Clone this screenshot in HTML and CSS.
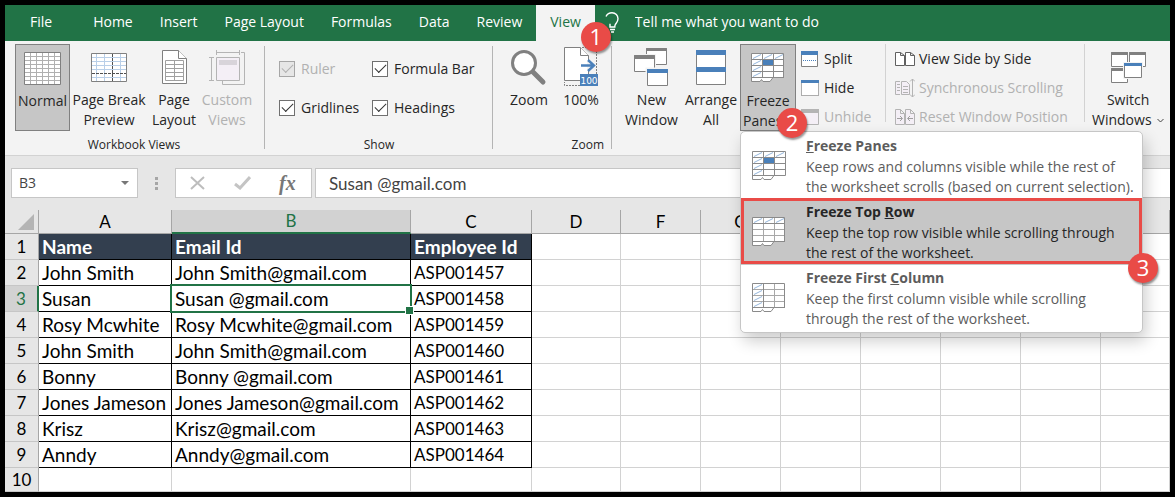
FILE: index.html
```html
<!DOCTYPE html>
<html lang="en">
<head>
<meta charset="utf-8">
<title>Worksheet</title>
<link rel="stylesheet" href="styles.css">
</head>
<body>
<div class="app">
  <nav class="tabs">
    <button class="tab tab-file">File</button>
    <button class="tab">Home</button>
    <button class="tab">Insert</button>
    <button class="tab">Page Layout</button>
    <button class="tab">Formulas</button>
    <button class="tab">Data</button>
    <button class="tab">Review</button>
    <button class="tab tab-active">View<span class="badge badge-view">1</span></button>
    <label class="tell">
      <svg width="14" height="21" viewBox="0 0 14 21" fill="none" stroke="#fff" stroke-width="1.4"><path d="M1 4.5C2.500 1.500 4.500.8 7 .8c3.600 0 6 2.700 6 6 0 2.700-1.500 4-2.600 5.600-.5.8-.6 1.600-.6 2.600H5v-3.200"/><path d="M5 17.500h5M6 20h3"/></svg>
      <input type="text" aria-label="Tell me" placeholder="Tell me what you want to do">
    </label>
  </nav>

  <div class="ribbon">
    <section class="group group-views">
      <div class="tools">
        <button class="big big-on">
          <svg width="37" height="33" viewBox="0 0 37 33" fill="#fff" stroke="#808080"><path d="M.5.5h36v32H.5z"/><path stroke="#b0b0b0" d="M6.500 1v31M12.500 1v31M18.500 1v31M24.500 1v31M30.500 1v31M1 4.500h35M1 8.500h35M1 12.500h35M1 16.500h35M1 20.500h35M1 24.500h35M1 28.500h35"/></svg>
          <span>Normal</span>
        </button>
        <button class="big big-break">
          <svg width="36" height="29" viewBox="0 0 36 29" fill="#fff" stroke="#808080"><path d="M.5.5h35v28H.5z"/><path stroke="#b9cfe8" d="M5.500 1v27M13.500 1v27M29.500 1v27M1 4.500h34M1 8.500h34M1 12.500h34M1 16.500h34M1 24.500h34"/><path stroke="#505050" stroke-dasharray="3 1" d="M21.500 1v27M1 20.500h34"/></svg>
          <span>Page Break<br>Preview</span>
        </button>
        <button class="big big-page">
          <svg width="25" height="34" viewBox="0 0 25 34" fill="#fff" stroke="#808080"><path d="M.5.5h16l8 8v25H.5z"/><path d="M16.500.5v8h8"/><path stroke="#a0a0a0" d="M3.500 10.500h18v20h-18zM12.500 10.500v20M3.500 14.500h18M3.500 18.500h18M3.500 22.500h18M3.500 26.500h18"/></svg>
          <span>Page<br>Layout</span>
        </button>
        <button class="big big-custom" disabled>
          <svg width="36" height="35" viewBox="0 0 36 35" fill="none" stroke="#b4b4b4"><path d="M7.500 2.500h23M7.500 0v5M30.500 0v5M2.500 7.500v23M0 7.500h5M0 30.500h5M32 2.500h3.500v32h-22V31"/><path fill="#f4eff6" d="M7.500 7.500h23v23h-23z"/><path fill="#d8d4da" stroke="none" d="M10 10h18v5H10z"/></svg>
          <span>Custom<br>Views</span>
        </button>
      </div>
      <h2>Workbook Views</h2>
    </section>

    <section class="group group-show">
      <div class="tools checks">
        <label class="off"><input type="checkbox" checked disabled>Ruler</label>
        <label><input type="checkbox" checked>Formula Bar</label>
        <label><input type="checkbox" checked>Gridlines</label>
        <label><input type="checkbox" checked>Headings</label>
      </div>
      <h2>Show</h2>
    </section>

    <section class="group group-zoom">
      <div class="tools">
        <button class="big big-zoom">
          <svg width="36" height="35" viewBox="0 0 36 35" fill="#fff" stroke="#808080"><path stroke-width="5" stroke-linecap="round" d="M22 22l10 10"/><circle cx="13" cy="13" r="11.500" stroke-width="3"/></svg>
          <span>Zoom</span>
        </button>
        <button class="big big-hundred">
          <svg width="34" height="40" viewBox="0 0 34 40" fill="#fff" stroke="#808080"><path fill="none" stroke-dasharray="2 1" d="M18 .5h14.500v38H.5V35"/><path d="M.5.5h16l8 8v25H.5z"/><path d="M16.500.5v8h8"/><path stroke="none" fill="#f3f3f3" d="M23 14h3v10h-3z"/><path fill="none" stroke="#4a80ba" stroke-width="2.400" d="M17 18.500h13M24 13l6 5.500-6 5.500"/><path fill="#4a80ba" stroke="none" d="M16 27h18v12H16z"/><text class="icon-text" x="25" y="37" text-anchor="middle">100</text></svg>
          <span>100%</span>
        </button>
      </div>
      <h2>Zoom</h2>
    </section>

    <section class="group group-window">
      <div class="tools">
        <button class="big big-new">
          <svg width="35" height="39" viewBox="0 0 35 39" fill="#fff" stroke="#808080"><path d="M12.500.5h20v16h-20z"/><path fill="#808080" d="M12.500.5h20v2h-20z"/><path stroke="#f3f3f3" d="M-.5 6.500h22v18h-22z"/><path d="M.5 7.500h20v16H.5z"/><path fill="#808080" d="M.5 7.500h20v3H.5z"/><path stroke="#f3f3f3" stroke-width="2" d="M12.500 20.500h22v18h-22z"/><path d="M13.500 21.500h20v16h-20z"/><path fill="#4a80ba" stroke="none" d="M13 21h21v4H13z"/></svg>
          <span>New<br>Window</span>
        </button>
        <button class="big big-arrange">
          <svg width="30" height="35" viewBox="0 0 30 35" fill="#fff" stroke="#808080"><path d="M.5.5h29v34H.5z"/><path fill="#4a80ba" stroke="none" d="M0 0h30v5H0zM0 17h30v5H0z"/></svg>
          <span>Arrange<br>All</span>
        </button>
        <div class="drop">
          <button class="big big-on big-freeze" aria-haspopup="menu" aria-expanded="true">
            <svg width="34" height="30" viewBox="0 0 34 30" fill="#fff" stroke="#8a8a8a"><path d="M.5.5h32v24H22l-3 4h-7l-1.500-2-1.500 2H.5z"/><path d="M11.500 1v23M22.500 1v23M1 6.500h32M1 12.500h32M1 18.500h32M1 24.500h32"/><path stroke="#94b6dc" d="M2 5.500l8-4M13 5.500l8-4M24 5.500l8-4M2 11.500l8-4M2 17.500l8-4M2 23.500l8-4"/><path fill="#4a80ba" stroke="none" d="M12 7h10v5H12z"/></svg>
            <span>Freeze<br>Panes <svg class="chev" width="7" height="5" viewBox="0 0 7 5" fill="none" stroke="#444"><path d="M.5 1l3 3 3-3"/></svg></span>
          </button>
          <span class="badge badge-freeze">2</span>
          <div class="menu" role="menu">
            <button class="item" role="menuitem">
              <svg width="34" height="30" viewBox="0 0 34 30" fill="#fff" stroke="#8a8a8a"><path d="M.5.5h33v24H22l-3 4h-7l-1.500-2-1.500 2H.5z"/><path d="M11.500 1v23M22.500 1v23M1 6.500h32M1 12.500h32M1 18.500h32M1 24.500h32"/><path stroke="#94b6dc" d="M2 5.500l8-4M13 5.500l8-4M24 5.500l8-4M2 11.500l8-4M2 17.500l8-4M2 23.500l8-4"/><path fill="#4a80ba" stroke="none" d="M12 7h10v5H12z"/></svg>
              <span><b><u>F</u>reeze Panes</b>Keep rows and columns visible while the rest of<br>the worksheet scrolls (based on current selection).</span>
            </button>
            <button class="item item-on" role="menuitem">
              <svg width="34" height="30" viewBox="0 0 34 30" fill="#fff" stroke="#8a8a8a"><path d="M.5.5h32v24H22l-3 4h-7l-1.500-2-1.500 2H.5z"/><path stroke="#a8a8a8" d="M11.500 1v23M22.500 1v23M1 12.500h31M1 18.500h31"/><path d="M1 6.500h32M1 24.500h32"/><path stroke="#94b6dc" d="M2 5.500l8-4M13 5.500l8-4M24 5.500l8-4"/></svg>
              <span><b>Freeze Top <u>R</u>ow</b>Keep the top row visible while scrolling through<br>the rest of the worksheet.</span>
            </button>
            <button class="item" role="menuitem">
              <svg width="34" height="30" viewBox="0 0 34 30" fill="#fff" stroke="#8a8a8a"><path d="M.5.5h32v24H22l-3 4h-7l-1.500-2-1.500 2H.5z"/><path stroke="#a8a8a8" d="M22.500 1v23M1 6.500h31M1 12.500h31M1 18.500h31"/><path d="M11.500 1v23M1 24.500h32"/><path stroke="#94b6dc" d="M2 5.500l8-4M2 11.500l8-4M2 17.500l8-4M2 23.500l8-4"/></svg>
              <span><b>Freeze First <u>C</u>olumn</b>Keep the first column visible while scrolling<br>through the rest of the worksheet.</span>
            </button>
            <span class="badge badge-row">3</span>
          </div>
        </div>
        <div class="smalls smalls-split">
          <button class="small"><svg width="18" height="16" viewBox="0 0 18 16" fill="#fff" stroke="#808080"><path d="M.5.5h16v15H.5z"/><path fill="#4a80ba" stroke="none" d="M0 0h17v4H0z"/><path stroke="#4a80ba" stroke-dasharray="1 1" d="M2 9.500h13"/></svg>Split</button>
          <button class="small"><svg width="18" height="16" viewBox="0 0 18 16" fill="#fff" stroke="#606060"><path stroke-dasharray="1 1" d="M.5 2.500h17v13H.5z"/><path fill="#4a80ba" stroke="none" d="M0 0h18v3H0z"/></svg>Hide</button>
          <button class="small" disabled><svg width="18" height="16" viewBox="0 0 18 16" fill="#f4eff6" stroke="#b4b4b4"><path d="M.5.5h17v15H.5z"/><path fill="#b4b4b4" stroke="none" d="M0 0h18v4H0z"/></svg>Unhide</button>
        </div>
        <div class="smalls smalls-side">
          <button class="small"><svg width="20" height="16" viewBox="0 0 20 16" fill="#fff" stroke="#606060"><path d="M.5 1.500h5l4 3v10h-9zM5.500 1.500v3h4M10.500 1.500h5l4 3v10h-9zM15.500 1.500v3h4"/></svg>View Side by Side</button>
          <button class="small" disabled><svg width="20" height="20" viewBox="0 0 20 20" fill="#f4eff6" stroke="#b4b4b4"><path d="M5 3.500H.5v13H5M6.500 3.500h5l3 3v10h-8zM2 6.500h3M2 9.500h3M2 12.500h3M8 8.500h5M8 11.500h5M8 14.500h5"/><path fill="none" d="M17.500 1v18M15 3.500L17.500 1 20 3.500M15 16.500l2.500 2.500 2.500-2.500"/></svg>Synchronous Scrolling</button>
          <button class="small" disabled><svg width="20" height="16" viewBox="0 0 20 16" fill="#f4eff6" stroke="#b4b4b4"><path d="M.5.5h5l4 4v11h-9zM5.500.5v4h4M10.500.5h5l4 4v11h-9zM15.500.5v4h4"/><path fill="none" stroke="#a0a0a0" d="M2 9.500h5M5 7l2.500 2.500L5 12M18 9.500h-5M15 7l-2.500 2.500L15 12"/></svg>Reset Window Position</button>
        </div>
        <button class="big big-switch">
          <svg width="35" height="31" viewBox="0 0 35 31" fill="#fff" stroke="#808080"><path d="M.5.5h16v14H.5z"/><path d="M18.500.5h16v14h-16z"/><path d="M.5 16.500h16v14H.5z"/><path fill="#808080" d="M.5.5h16v2H.5zM18.500.5h16v2h-16zM.5 16.500h16v2H.5z"/><path stroke="#f3f3f3" d="M12.500 10.500h19v16h-19z"/><path d="M13.500 11.500h17v14h-17z"/><path fill="#4a80ba" stroke="none" d="M13 11h18v3H13z"/></svg>
          <span>Switch<br>Windows <svg class="chev" width="7" height="5" viewBox="0 0 7 5" fill="none" stroke="#444"><path d="M.5 1l3 3 3-3"/></svg></span>
        </button>
      </div>
    </section>
  </div>

  <div class="formula">
    <div class="box namebox">
      <input type="text" value="B3" aria-label="Name box">
      <button aria-label="Cell names"><svg width="8" height="4" viewBox="0 0 8 4" fill="#777"><path d="M0 0h8L4 4z"/></svg></button>
    </div>
    <svg class="grip" width="3" height="13" viewBox="0 0 3 13" fill="#a6a6a6"><path d="M0 0h3v3H0zM0 5h3v3H0zM0 10h3v3H0z"/></svg>
    <div class="box fxbox">
      <button aria-label="Cancel"><svg width="16" height="14" viewBox="0 0 16 14" fill="none" stroke="#bdbdbd" stroke-width="2"><path d="M1 1l13 12M14 1L1 13"/></svg></button>
      <button aria-label="Enter"><svg width="17" height="14" viewBox="0 0 17 14" fill="none" stroke="#c4c4c4" stroke-width="3"><path d="M1 8l5 4L16 1"/></svg></button>
      <button class="fx" aria-label="Insert function">fx</button>
    </div>
    <input class="box entry" type="text" value="Susan @gmail.com" aria-label="Formula bar">
  </div>

  <table class="sheet">
    <colgroup><col class="c-row"><col class="c-a"><col class="c-b"><col class="c-c"><col class="c-d"><col class="c-n"><col class="c-n"><col class="c-n"><col class="c-n"><col class="c-n"><col class="c-n"><col></colgroup>
    <thead><tr><th class="corner"><svg width="16" height="16" viewBox="0 0 16 16" fill="#b4b4b4"><path d="M16 0v16H0z"/></svg></th><th>A</th><th class="sel">B</th><th>C</th><th>D</th><th>F</th><th>G</th><th></th><th></th><th></th><th></th><th>L</th></tr></thead>
    <tbody>
      <tr class="title"><th>1</th><td>Name</td><td>Email Id</td><td>Employee Id</td><td></td><td></td><td></td><td></td><td></td><td></td><td></td><td></td></tr>
      <tr class="data"><th>2</th><td>John Smith</td><td>John Smith@gmail.com</td><td>ASP001457</td><td></td><td></td><td></td><td></td><td></td><td></td><td></td><td></td></tr>
      <tr class="data"><th class="sel">3</th><td>Susan</td><td class="cursor">Susan @gmail.com</td><td>ASP001458</td><td></td><td></td><td></td><td></td><td></td><td></td><td></td><td></td></tr>
      <tr class="data"><th>4</th><td>Rosy Mcwhite</td><td>Rosy Mcwhite@gmail.com</td><td>ASP001459</td><td></td><td></td><td></td><td></td><td></td><td></td><td></td><td></td></tr>
      <tr class="data"><th>5</th><td>John Smith</td><td>John Smith@gmail.com</td><td>ASP001460</td><td></td><td></td><td></td><td></td><td></td><td></td><td></td><td></td></tr>
      <tr class="data"><th>6</th><td>Bonny</td><td>Bonny @gmail.com</td><td>ASP001461</td><td></td><td></td><td></td><td></td><td></td><td></td><td></td><td></td></tr>
      <tr class="data"><th>7</th><td>Jones Jameson</td><td>Jones Jameson@gmail.com</td><td>ASP001462</td><td></td><td></td><td></td><td></td><td></td><td></td><td></td><td></td></tr>
      <tr class="data"><th>8</th><td>Krisz</td><td>Krisz@gmail.com</td><td>ASP001463</td><td></td><td></td><td></td><td></td><td></td><td></td><td></td><td></td></tr>
      <tr class="data"><th>9</th><td>Anndy</td><td>Anndy@gmail.com</td><td>ASP001464</td><td></td><td></td><td></td><td></td><td></td><td></td><td></td><td></td></tr>
      <tr class="last"><th>10</th><td></td><td></td><td></td><td></td><td></td><td></td><td></td><td></td><td></td><td></td><td></td></tr>
    </tbody>
  </table>
</div>
</body>
</html>
```
FILE: styles.css
```css
* { box-sizing: border-box; }
body {
  margin: 0;
  background: #000;
  color: #262626;
  font: 14px/20px "Open Sans", "Noto Sans", sans-serif;
}
button, input { font: inherit; color: inherit; }
button { border: 0; padding: 0; background: none; }
svg { display: block; flex: none; }
.app { border: 5px solid #000; background: #fff; }

/* tabs */
.tabs { display: flex; gap: 1px; height: 36px; background: #217346; color: #fff; }
.tab { padding: 0 13px 3px; white-space: nowrap; }
.tab-file { margin: 0 14px 0 12px; }
.tab-active { position: relative; padding: 0 14px 3px; background: #f3f3f3; color: #217346; }
.tell { display: flex; flex: 1; align-items: flex-start; gap: 16px; padding: 7px 0 0 9px; }
.tell input { flex: 1; min-width: 0; border: 0; padding: 0; background: none; outline: 0; }
.tell input::placeholder { color: #fff; opacity: 1; }

.badge {
  position: absolute;
  z-index: 3;
  width: 30px;
  height: 30px;
  border-radius: 50%;
  background: #e94b47;
  color: #fff;
  font: 22px/29px "Open Sans", sans-serif;
  text-align: center;
  box-shadow: 1px 2px 2px #0006;
}
.badge-view { right: -16px; top: 17px; }
.badge-freeze { right: -11px; bottom: -7px; }
.badge-row { right: -16px; top: 121px; }

/* ribbon */
.ribbon {
  display: flex;
  height: 115px;
  padding-top: 3px;
  background: #f3f3f3;
  border-bottom: 1px solid #d2d2d2;
}
.group { position: relative; display: flex; flex-direction: column; flex: none; }
.group:not(:last-child)::after {
  content: "";
  position: absolute;
  right: 0;
  top: 2px;
  bottom: 6px;
  width: 1px;
  background: #b4b4b4;
}
.group h2 { margin: 4px 0 0; font-size: 12px; font-weight: 400; line-height: 20px; text-align: center; }
.group-views { width: 260px; padding-left: 10px; }
.group-views h2 { margin-right: 12px; }
.group-show { width: 228px; }
.group-zoom { width: 119px; padding: 0 8px 0 14px; }
.group-zoom h2 { text-align: right; }
.group-window { flex: 1; padding-left: 9px; }
.tools { display: flex; height: 87px; }
.big {
  display: grid;
  grid-template-rows: 46px auto;
  align-content: start;
  justify-items: center;
  align-items: center;
  flex: none;
  white-space: nowrap;
}
.big > svg { overflow: visible; }
.big:disabled, .small:disabled, .off { color: #b1b1b1; }
.big-on { width: 55px; border: 1px solid #808080; background: #c6c6c6; }
.big-break { width: 78px; }
.big-page { width: 52px; }
.big-custom { width: 54px; }
.big-zoom { width: 44px; }
.big-hundred { width: 60px; }
.big-new { width: 61px; }
.big-arrange { width: 58px; }
.big-freeze { width: 56px; height: 87px; }
.drop { position: relative; }
.icon-text { font: 9px "DejaVu Sans", sans-serif; fill: #fff; stroke: none; }
.chev { display: inline-block; vertical-align: 2px; }
.big-switch { margin-left: 7px; }
.big-switch .chev { margin-left: 2px; }

.checks {
  display: grid;
  grid-template-columns: 93px auto;
  grid-template-rows: 39px 39px;
  align-items: center;
  padding: 5px 0 0 14px;
}
.checks label { display: flex; align-items: center; gap: 6px; white-space: nowrap; }
.checks input {
  appearance: none;
  width: 16px;
  height: 16px;
  margin: 0;
  border: 1px solid #707070;
  background: #fff;
  display: grid;
  place-items: center;
}
.checks input:disabled { border-color: #a6a6a6; background: #e6e6e6; }
.checks input:checked::before {
  content: "";
  width: 10px;
  height: 5px;
  margin-bottom: 3px;
  border: solid #333;
  border-width: 0 0 1px 1px;
  transform: rotate(-45deg);
}
.checks input:disabled::before { border-color: #b1b1b1; }

.smalls { display: flex; flex-direction: column; gap: 9px; padding-top: 5px; margin-bottom: 9px; }
.small { display: flex; align-items: center; height: 20px; white-space: nowrap; }
.smalls-split { width: 90px; padding-left: 5px; border-right: 1px solid #d2d2d2; }
.smalls-split .small { gap: 5px; }
.smalls-side { width: 199px; padding-left: 9px; border-right: 1px solid #d2d2d2; }
.smalls-side .small { gap: 4px; }

/* drop-down menu */
.menu {
  position: absolute;
  z-index: 2;
  left: 0;
  top: 87px;
  width: 403px;
  padding: 1px 0;
  border: 1px solid #c6c6c6;
  border-radius: 5px;
  background: #fff;
  box-shadow: 3px 8px 16px #0003;
}
.item {
  position: relative;
  display: flex;
  gap: 20px;
  width: 100%;
  height: 66px;
  padding: 2px 0 0 11px;
  color: #5c5c5c;
  text-align: left;
  white-space: nowrap;
}
.item svg { margin-top: 16px; }
.item b { display: block; line-height: 22px; }
.item-on { background: #c6c6c6; color: #262626; }
.item-on::after { content: ""; position: absolute; inset: -1px 0 1px; border: 3px solid #e94b47; }

/* formula bar */
.formula { display: flex; align-items: center; height: 54px; padding: 0 0 0 6px; background: #e6e6e6; }
.box { height: 30px; border: 1px solid #c6c6c6; background: #fff; color: #444; }
.namebox { display: flex; width: 127px; margin-right: 17px; }
.namebox input { flex: 1; min-width: 0; border: 0; padding: 0 0 0 7px; background: none; }
.namebox button { width: 24px; display: grid; place-items: center; }
.grip { margin-right: 17px; }
.fxbox { display: flex; gap: 28px; align-items: center; width: 137px; margin-right: 3px; padding-left: 14px; }
.fx { font: italic bold 20px/28px "Liberation Serif", serif; color: #777; }
.entry { flex: 1; min-width: 0; padding: 0 13px; border-right: 0; font: 17px "Lato", sans-serif; }

/* worksheet */
.sheet {
  width: 100%;
  table-layout: fixed;
  border-collapse: separate;
  border-spacing: 0;
  color: #000;
  font: 19px/25px "Lato", sans-serif;
}
.c-row { width: 34px; }
.c-a { width: 133px; }
.c-b { width: 239px; }
.c-c { width: 121px; }
.c-d { width: 89px; }
.c-n { width: 80px; }
.sheet th, .sheet td { height: 26px; padding: 0; border: solid #d2d2d2; border-width: 0 1px 1px 0; white-space: nowrap; }
.sheet th { background: #e6e6e6; border-color: #a6a6a6; font-weight: 400; font-size: 17px; }
.sheet thead th { height: 24px; line-height: 22px; }
.sheet tbody th { border-bottom-color: #c6c6c6; }
.sheet .corner svg { margin: 0 0 0 13px; }
.sheet th.sel { background: #d2d2d2; color: #217346; }
.sheet thead th.sel { border-bottom: 2px solid #217346; }
.sheet tbody th.sel { border-right: 2px solid #217346; }
.sheet td { padding-left: 3px; }
.title td:nth-child(-n+4) { background: #333f4f; color: #fff; font-weight: 700; border-color: #000; }
.data td:nth-child(-n+4) { border-color: #000; }
.data td:nth-child(4) { font-size: 17px; }
.sheet .cursor { position: relative; }
.cursor::before { content: ""; position: absolute; inset: -2px; border: 2px solid #217346; }
.cursor::after {
  content: "";
  position: absolute;
  right: -4px;
  bottom: -4px;
  width: 7px;
  height: 7px;
  border: 1px solid #fff;
  background: #217346;
}
.sheet .last th, .sheet .last td { height: 24px; line-height: 23px; }
```
